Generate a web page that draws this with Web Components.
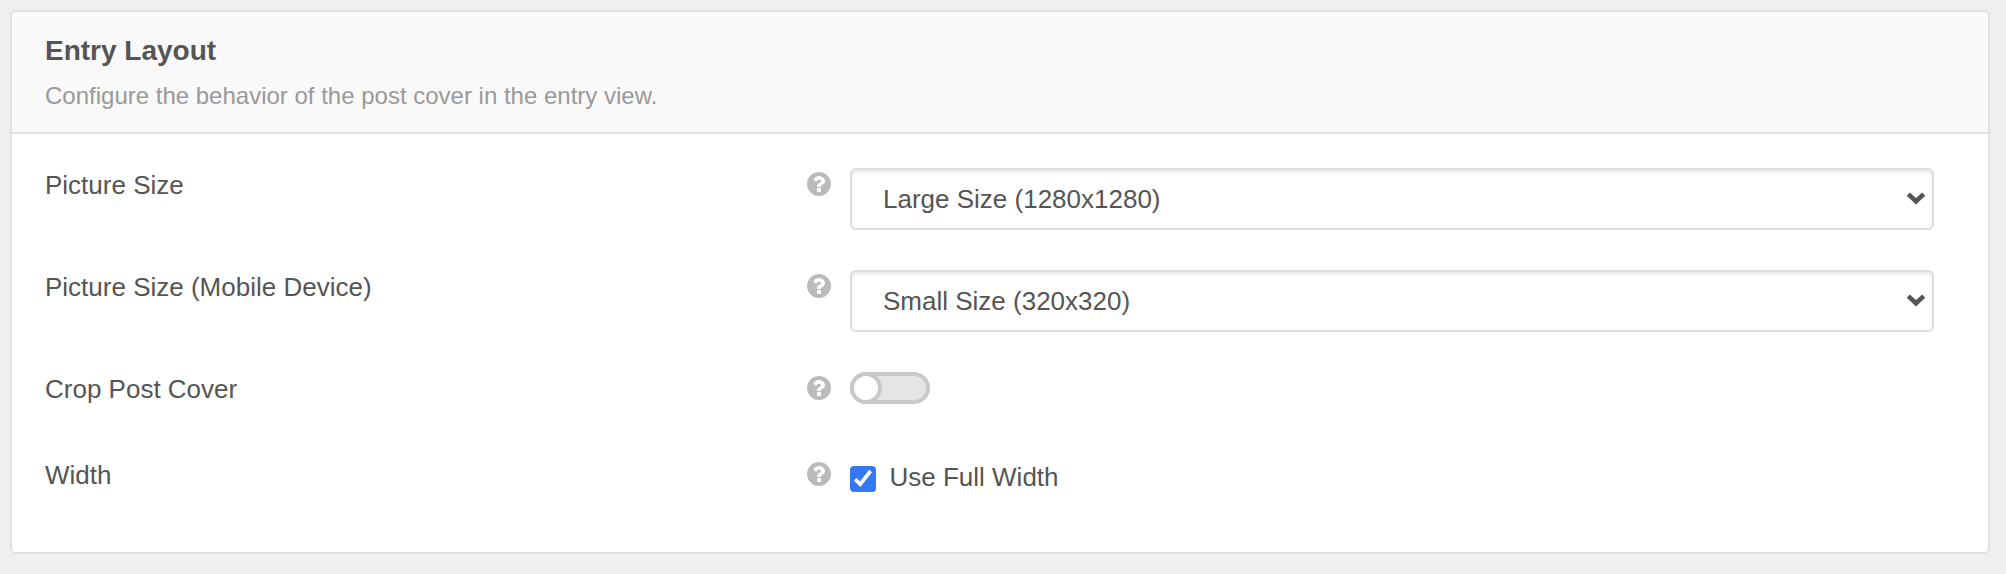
<!DOCTYPE html>
<html lang="en">
<head>
<meta charset="utf-8">
<title>Entry Layout</title>
<style>
    html, body {
        margin: 0;
        height: 100%;
    }

    body {
        box-sizing: border-box;
        padding: 10px 16px 20px 10px;
        background: #efefef;
        color: #555;
        font-family: "Liberation Sans", Arial, Helvetica, sans-serif;
        font-size: 26px;
        line-height: 34px;
    }
</style>
</head>
<body>

<settings-panel heading="Entry Layout" description="Configure the behavior of the post cover in the entry view.">
    <settings-row label="Picture Size">
        <select-box value="Large Size (1280x1280)"></select-box>
    </settings-row>
    <settings-row label="Picture Size (Mobile Device)">
        <select-box value="Small Size (320x320)"></select-box>
    </settings-row>
    <settings-row label="Crop Post Cover">
        <toggle-switch></toggle-switch>
    </settings-row>
    <settings-row label="Width">
        <check-box checked>Use Full Width</check-box>
    </settings-row>
</settings-panel>

<script>
    // Panel with a header and a stack of rows
    class SettingsPanel extends HTMLElement {
        constructor() {
            super();
            this.attachShadow({ mode: "open" });
        }

        connectedCallback() {
            this.shadowRoot.innerHTML = `
                <style>
                    :host {
                        display: flex;
                        flex-direction: column;
                        box-sizing: border-box;
                        height: 100%;
                        border: 2px solid #dee2e6;
                        border-radius: 6px;
                        background: #fff;
                        overflow: hidden;
                    }

                    header {
                        box-sizing: border-box;
                        height: 122px;
                        padding: 21px 33px 0;
                        border-bottom: 2px solid #dee2e6;
                        background: #f9f9f9;
                    }

                    h2 {
                        margin: 0 0 11px;
                        font-size: 28px;
                        line-height: 36px;
                        font-weight: 700;
                    }

                    p {
                        margin: 0;
                        font-size: 24px;
                        line-height: 32px;
                        color: #999;
                    }

                    .body {
                        display: flex;
                        flex-direction: column;
                        gap: 40px;
                        padding: 34px 54px 0 33px;
                    }
                </style>
                <header>
                    <h2>${this.getAttribute("heading")}</h2>
                    <p>${this.getAttribute("description")}</p>
                </header>
                <div class="body"><slot></slot></div>
            `;
        }
    }

    // Label, help icon and a slotted control
    class SettingsRow extends HTMLElement {
        constructor() {
            super();
            this.attachShadow({ mode: "open" });
        }

        connectedCallback() {
            this.shadowRoot.innerHTML = `
                <style>
                    :host {
                        display: grid;
                        grid-template-columns: 762.300px 24px 1fr;
                        min-height: 46px;
                        align-items: start;
                    }

                    help-icon {
                        margin-top: 4px;
                    }

                    .control {
                        padding-left: 18.700px;
                    }
                </style>
                <span>${this.getAttribute("label")}</span>
                <help-icon></help-icon>
                <div class="control"><slot></slot></div>
            `;
        }
    }

    class HelpIcon extends HTMLElement {
        constructor() {
            super();
            this.attachShadow({ mode: "open" }).innerHTML = `
                <style>
                    :host {
                        display: block;
                        width: 24px;
                        height: 24px;
                        color: #bbb;
                    }

                    svg {
                        display: block;
                        width: 100%;
                        height: 100%;
                    }
                </style>
                <svg viewBox="128 128 1536 1536" fill="currentColor">
                    <path d="M1024 1376v-192q0-14-9-23t-23-9h-192q-14 0-23 9t-9 23v192q0 14 9 23t23 9h192q14 0 23-9t9-23zm256-672q0-88-55.500-163t-138.500-116-170-41q-243 0-371 213-15 24 8 42l132 100q7 6 19 6 16 0 25-12 53-68 86-92 34-24 86-24 48 0 85.500 26t37.500 59q0 38-20 61t-68 45q-63 28-115.500 86.500t-52.500 125.500v36q0 14 9 23t23 9h192q14 0 23-9t9-23q0-19 21.500-49.500t54.500-49.500q32-18 49-28.500t46-35 44.500-48 28-60.500 12.500-81zm384 192q0 209-103 385.500t-279.500 279.500-385.500 103-385.500-103-279.500-279.500-103-385.500 103-385.500 279.500-279.500 385.500-103 385.500 103 279.500 279.500 103 385.500z"/>
                </svg>
            `;
        }
    }

    class SelectBox extends HTMLElement {
        constructor() {
            super();
            this.attachShadow({ mode: "open" });
        }

        connectedCallback() {
            this.shadowRoot.innerHTML = `
                <style>
                    :host {
                        display: flex;
                        align-items: center;
                        justify-content: space-between;
                        box-sizing: border-box;
                        height: 62px;
                        padding: 0 6px 0 31px;
                        border: 2px solid #ddd;
                        border-radius: 6px;
                        background: #fff;
                        box-shadow: inset 0 2px 4px rgba(0, 0, 0, 0.1);
                        cursor: pointer;
                    }

                    svg {
                        display: block;
                        width: 20px;
                        height: 14px;
                    }
                </style>
                <span>${this.getAttribute("value")}</span>
                <svg viewBox="0 0 20 14" fill="none" stroke="#555" stroke-width="4.600">
                    <path d="M2.300 2.100 10 9.300 17.700 2.100"/>
                </svg>
            `;
        }
    }

    class ToggleSwitch extends HTMLElement {
        constructor() {
            super();
            this.attachShadow({ mode: "open" }).innerHTML = `
                <style>
                    :host {
                        display: block;
                        box-sizing: border-box;
                        width: 80px;
                        height: 32px;
                        border: 4px solid #c8c8c8;
                        border-radius: 16px;
                        background: #e5e5e5;
                        cursor: pointer;
                    }

                    .knob {
                        width: 24px;
                        height: 24px;
                        border-radius: 50%;
                        background: #fff;
                        box-shadow: 0 0 0 4px #c8c8c8;
                    }
                </style>
                <div class="knob"></div>
            `;
        }
    }

    class CheckBox extends HTMLElement {
        constructor() {
            super();
            this.attachShadow({ mode: "open" }).innerHTML = `
                <style>
                    :host {
                        display: flex;
                        align-items: flex-start;
                        gap: 13.500px;
                        padding-top: 2px;
                        cursor: pointer;
                    }

                    .box {
                        width: 26px;
                        height: 26px;
                        margin-top: 6px;
                        border-radius: 4px;
                        background: #3478f6;
                    }

                    svg {
                        display: none;
                    }

                    :host([checked]) svg {
                        display: block;
                    }
                </style>
                <div class="box">
                    <svg width="26" height="26" viewBox="0 0 26 26" fill="none" stroke="#fff" stroke-width="3.700">
                        <path d="M5.200 13.200 10.200 18.300 20.600 5"/>
                    </svg>
                </div>
                <span><slot></slot></span>
            `;
        }
    }

    customElements.define("settings-panel", SettingsPanel);
    customElements.define("settings-row", SettingsRow);
    customElements.define("help-icon", HelpIcon);
    customElements.define("select-box", SelectBox);
    customElements.define("toggle-switch", ToggleSwitch);
    customElements.define("check-box", CheckBox);
</script>
</body>
</html>
